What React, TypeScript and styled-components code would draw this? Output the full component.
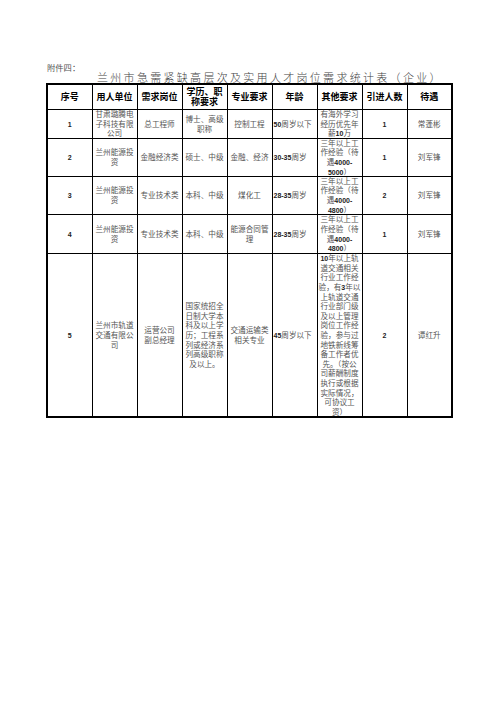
import React from 'react'
import styled, { createGlobalStyle } from 'styled-components'

const GlobalStyle = createGlobalStyle`
  html, body {
    margin: 0;
    padding: 0;
    background: #fff;
  }
  body {
    font-family: "Noto Sans CJK SC", sans-serif;
  }
`

const Page = styled.div`
  width: 496px;
  height: 702px;
  box-sizing: border-box;
  padding: 62px 0 0 46px;
`

const Attachment = styled.div`
  font-size: 8.3px;
  line-height: 10px;
  color: #555;
  padding-left: 1px;
`

const Title = styled.div`
  font-weight: 300;
  font-size: 11px;
  letter-spacing: 2.3px;
  line-height: 11px;
  color: #444;
  padding-left: 51px;
  white-space: nowrap;
`

const Sheet = styled.table`
  border-collapse: collapse;
  table-layout: fixed;
  width: 406px;
  border: 2px solid #000;
`

const Col = styled.col`
  width: 45px;
`

const Row = styled.tr<{ $h: number }>`
  height: ${(p) => p.$h}px;
`

const HeadCell = styled.th`
  border: 1px solid #000;
  padding: 0;
  font-weight: 700;
  font-size: 9px;
  line-height: 9.5px;
  color: #000;
  text-align: center;
  vertical-align: middle;
  white-space: pre-line;
`

const Cell = styled.td<{ $align?: 'left' | 'center' }>`
  border: 1px solid #000;
  padding: ${(p) => (p.$align === 'left' ? '0 0 0 1px' : '0')};
  font-size: 7.6px;
  line-height: 9.6px;
  color: #555;
  text-align: ${(p) => p.$align ?? 'center'};
  vertical-align: middle;
  white-space: pre-line;
`

// lets the text spill over the cell edge a little, as the sheet does
const CellText = styled.div`
  margin: -3px 0;
`

const Digits = styled.span`
  font-family: "Liberation Sans", sans-serif;
  font-weight: 700;
  font-size: 7px;
  line-height: 0;
  color: #222;
`

const headers = ['序号', '用人单位', '需求岗位', '学历、职\n称要求', '专业要求', '年龄', '其他要求', '引进人数', '待遇']

const rows: { h: number; cells: string[] }[] = [
  {
    h: 29,
    cells: ['1', '甘肃璐腾电\n子科技有限\n公司', '总工程师', '博士、高级\n职称', '控制工程', '50周岁以下', '有海外学习\n经历优先年\n薪10万', '1', '常蓬彬'],
  },
  {
    h: 38,
    cells: ['2', '兰州能源投\n资', '金融经济类', '硕士、中级', '金融、经济', '30-35周岁', '三年以上工\n作经验（待\n遇4000-\n5000）', '1', '刘军锋'],
  },
  {
    h: 38,
    cells: ['3', '兰州能源投\n资', '专业技术类', '本科、中级', '煤化工', '28-35周岁', '三年以上工\n作经验（待\n遇4000-\n4800）', '2', '刘军锋'],
  },
  {
    h: 39,
    cells: ['4', '兰州能源投\n资', '专业技术类', '本科、中级', '能源合同管\n理', '28-35周岁', '三年以上工\n作经验（待\n遇4000-\n4800）', '1', '刘军锋'],
  },
  {
    h: 164,
    cells: [
      '5',
      '兰州市轨道\n交通有限公\n司',
      '运营公司\n副总经理',
      '国家统招全\n日制大学本\n科及以上学\n历；工程系\n列或经济系\n列高级职称\n及以上。',
      '交通运输类\n相关专业',
      '45周岁以下',
      '10年以上轨\n道交通相关\n行业工作经\n验，有3年以\n上轨道交通\n行业部门级\n及以上管理\n岗位工作经\n验，参与过\n地铁新线筹\n备工作者优\n先。（按公\n司薪酬制度\n执行或根据\n实际情况，\n可协议工\n资）',
      '2',
      '谭红升',
    ],
  },
]

// digits in the sheet come out in a heavier latin face
function renderText(text: string) {
  return text.split(/([0-9-]+)/).map((part, i) =>
    /^[0-9-]+$/.test(part) ? <Digits key={i}>{part}</Digits> : <React.Fragment key={i}>{part}</React.Fragment>
  )
}

export default function App() {
  return (
    <>
      <GlobalStyle />
      <Page>
        <Attachment>附件四：</Attachment>
        <Title>兰州市急需紧缺高层次及实用人才岗位需求统计表（企业）</Title>
        <Sheet>
          <colgroup>
            {headers.map((_, i) => (
              <Col key={i} />
            ))}
          </colgroup>
          <thead>
            <Row $h={25}>
              {headers.map((h) => (
                <HeadCell key={h}>{h}</HeadCell>
              ))}
            </Row>
          </thead>
          <tbody>
            {rows.map((r, ri) => (
              <Row key={ri} $h={r.h}>
                {r.cells.map((c, ci) => (
                  <Cell key={ci} $align={ci === 5 ? 'left' : 'center'}>
                    <CellText>{renderText(c)}</CellText>
                  </Cell>
                ))}
              </Row>
            ))}
          </tbody>
        </Sheet>
      </Page>
    </>
  )
}
